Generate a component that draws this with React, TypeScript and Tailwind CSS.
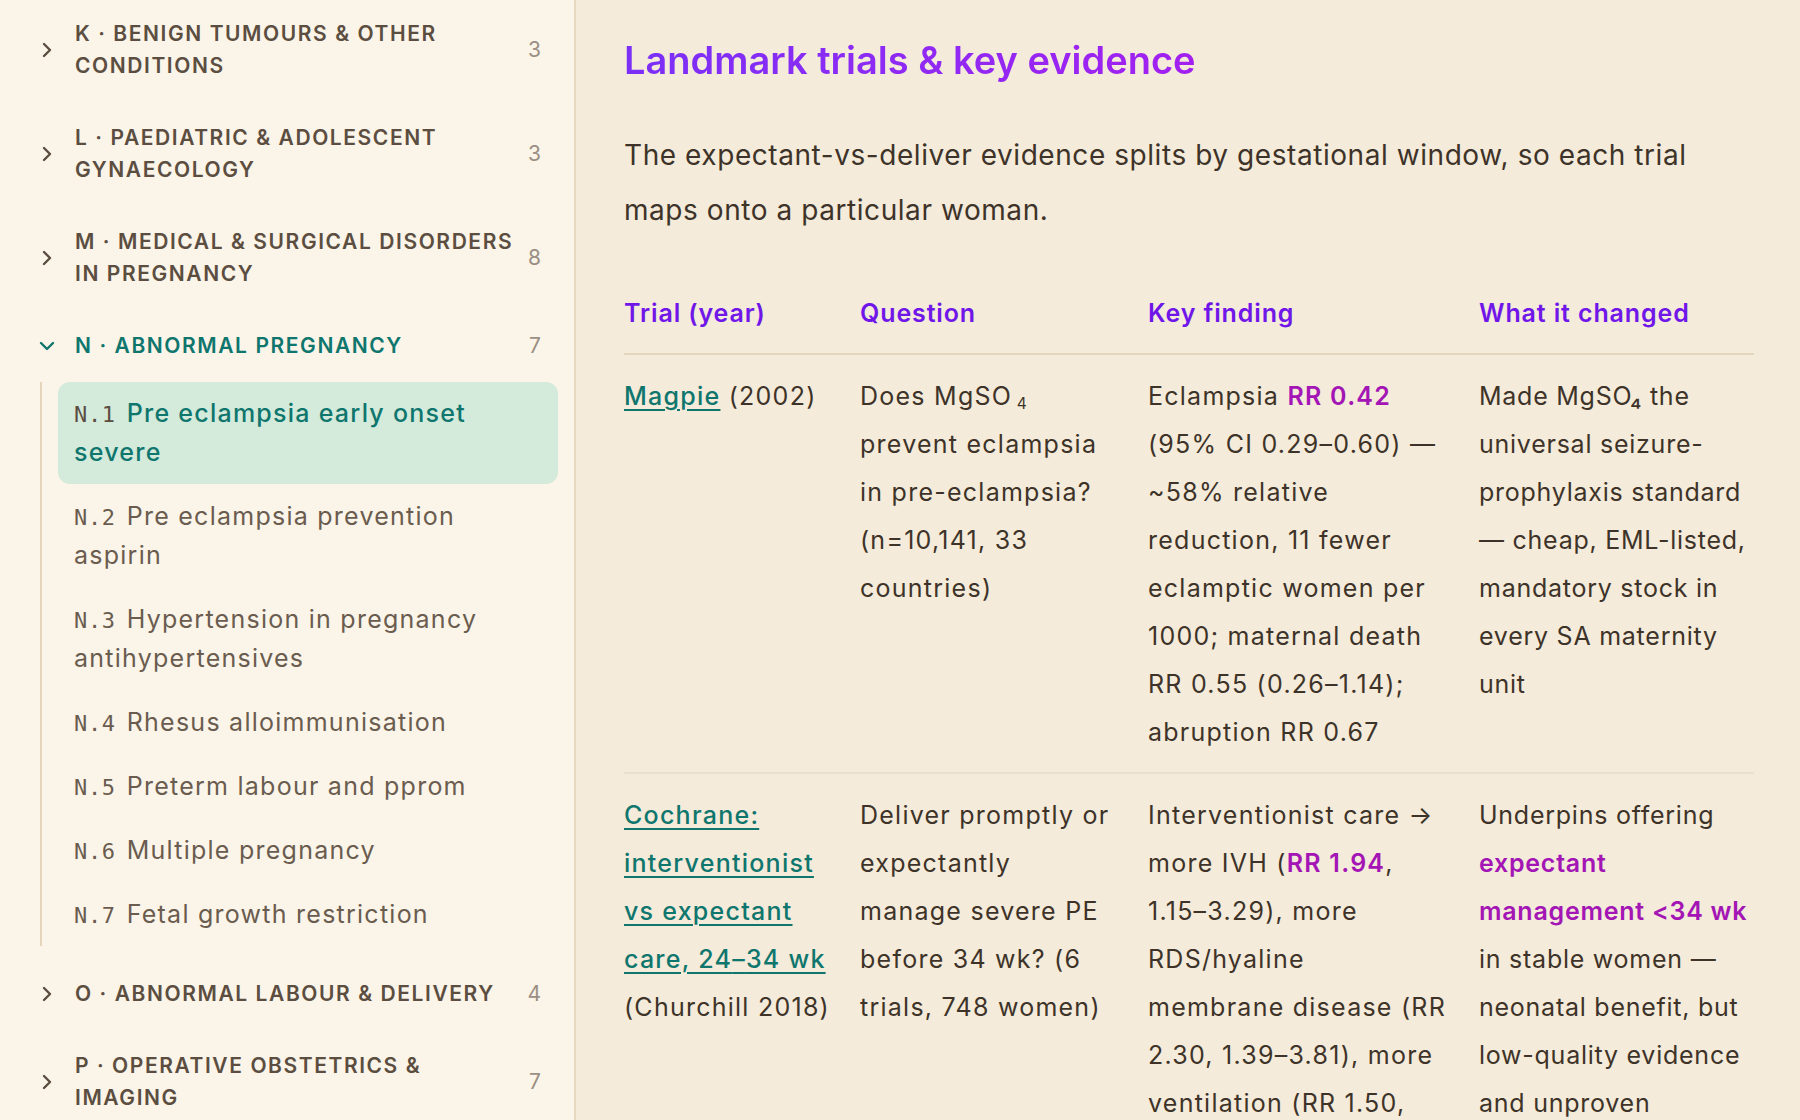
import React from "react";

const SANS = { fontFamily: "Inter, 'Noto Sans', sans-serif" };
const MONO = { fontFamily: "'DejaVu Sans Mono', 'Liberation Mono', monospace" };
const ND = "\u2060\u2013\u2060";

function Chevron({ open }: { open?: boolean }) {
  return (
    <svg width="22" height="22" viewBox="0 0 22 22" fill="none" className="shrink-0">
      {open ? (
        <path d="M5 8 L11 14 L17 8" stroke="currentColor" strokeWidth="2.4" strokeLinecap="round" strokeLinejoin="round" />
      ) : (
        <path d="M8 5 L14 11 L8 17" stroke="currentColor" strokeWidth="2.4" strokeLinecap="round" strokeLinejoin="round" />
      )}
    </svg>
  );
}

function Section({ label, count, open }: { label: string; count: number; open?: boolean }) {
  return (
    <div className={`flex items-center py-5 pl-[20px] pr-[17px] ${open ? "text-[#0f766e]" : "text-[#5b4e41]"}`}>
      <Chevron open={open} />
      <div className="ml-[17px] flex-1 pr-3 text-[21px] font-semibold uppercase leading-[32px] tracking-[0.075em]">{label}</div>
      <div className="text-[21px] leading-[32px] text-[#9a8f84]">{count}</div>
    </div>
  );
}

const subItems = [
  ["N.1", "Pre eclampsia early onset severe"],
  ["N.2", "Pre eclampsia prevention aspirin"],
  ["N.3", "Hypertension in pregnancy antihypertensives"],
  ["N.4", "Rhesus alloimmunisation"],
  ["N.5", "Preterm labour and pprom"],
  ["N.6", "Multiple pregnancy"],
  ["N.7", "Fetal growth restriction"],
];

function Hi({ children }: { children: React.ReactNode }) {
  return <span className="font-semibold text-[#a315b4]">{children}</span>;
}

function Link({ children }: { children: React.ReactNode }) {
  return <span className="font-medium text-[#0f766e] underline decoration-[2px] underline-offset-[4px]">{children}</span>;
}

function Sub({ children }: { children: React.ReactNode }) {
  return <span className="relative top-[0.25em] ml-[0.3em] text-[0.62em] leading-none">{children}</span>;
}

export default function App() {
  return (
    <div className="flex h-[1120px] w-[1800px] overflow-hidden bg-[#f4ebda]" style={SANS}>
      <aside className="h-full w-[576px] shrink-0 overflow-hidden border-r-2 border-[#e7d9c0] bg-[#fbf4e8] px-4">
        <div className="-mt-[2px]">
          <Section label="K · Benign tumours & other conditions" count={3} />
          <Section label="L · Paediatric & adolescent gynaecology" count={3} />
          <Section label="M · Medical & surgical disorders in pregnancy" count={8} />
          <Section label="N · Abnormal pregnancy" count={7} open />
          <div className="mb-3 ml-6 flex flex-col gap-[1px] border-l-2 border-[#e5d6bb] pl-4">
            {subItems.map(([code, name], i) => (
              <div
                key={code}
                className={`rounded-[12px] py-3 pl-4 pr-6 text-[25px] leading-[39px] tracking-[0.05em] ${
                  i === 0 ? "bg-[#d4eadb] font-medium text-[#0f766e]" : "text-[#6a5c4f]"
                }`}
              >
                <span
                  className={`mr-[11px] text-[22px] font-normal leading-none tracking-[0.03em] ${i === 0 ? "text-[#5b4e41]" : "text-[#6a5c4f]"}`}
                  style={MONO}
                >
                  {code}
                </span>
                {name}
              </div>
            ))}
          </div>
          <Section label="O · Abnormal labour & delivery" count={4} />
          <Section label="P · Operative obstetrics & imaging" count={7} />
        </div>
      </aside>

      <main className="h-full flex-1 overflow-hidden pl-12 pr-[46px] pt-[36px]">
        <h2 className="w-fit bg-gradient-to-r from-[#7b2ff7] to-[#a21ff0] bg-clip-text text-[38px] font-semibold leading-[48px] text-transparent">
          Landmark trials &amp; key evidence
        </h2>
        <p className="mt-[44px] pr-1 text-[28px] leading-[55px] tracking-[0.02em] text-[#3e3329]">
          The expectant-vs-deliver evidence splits by gestational window, so each trial maps onto a particular woman.
        </p>

        <table className="mt-[59px] w-full table-fixed border-collapse text-left text-[25px] leading-[48px] tracking-[0.05em] text-[#3e3329]">
          <colgroup>
            <col className="w-[236px]" />
            <col className="w-[288px]" />
            <col className="w-[331px]" />
            <col />
          </colgroup>
          <thead>
            <tr className="border-b-2 border-[#e3d6bd] text-[25px] font-semibold tracking-[0.035em] text-[#7016e8]">
              <th className="pb-6 pr-6 font-semibold leading-[32px]">Trial (year)</th>
              <th className="pb-6 pr-6 font-semibold leading-[32px]">Question</th>
              <th className="pb-6 pr-6 font-semibold leading-[32px]">Key finding</th>
              <th className="pb-6 font-semibold leading-[32px]">What it changed</th>
            </tr>
          </thead>
          <tbody>
            <tr className="border-b-2 border-[#ebe0cc] align-top">
              <td className="pb-4 pr-[25px] pt-[17px]">
                <Link>Magpie</Link> (2002)
              </td>
              <td className="pb-4 pr-[30px] pt-[17px]">
                Does MgSO<Sub>4</Sub> prevent eclampsia in pre-eclampsia? (n=10,141, 33 countries)
              </td>
              <td className="pb-4 pr-[26px] pt-[17px]">
                Eclampsia <Hi>RR 0.42</Hi> (95% CI 0.29{ND}0.60) — ~58% relative reduction, 11 fewer eclamptic women per 1000; maternal death RR 0.55 (0.26{ND}1.14); abruption RR 0.67
              </td>
              <td className="pb-4 pt-[17px] tracking-[0.03em]">
                Made MgSO₄ the universal seizure-prophylaxis standard — cheap, EML-listed, mandatory stock in every SA maternity unit
              </td>
            </tr>
            <tr className="align-top">
              <td className="pb-4 pr-[25px] pt-[17px]">
                <Link>Cochrane: interventionist vs expectant care, 24{ND}34 wk</Link> (Churchill 2018)
              </td>
              <td className="pb-4 pr-[30px] pt-[17px]">Deliver promptly or expectantly manage severe PE before 34 wk? (6 trials, 748 women)</td>
              <td className="pb-4 pr-[26px] pt-[17px]">
                Interventionist care → more IVH (<Hi>RR 1.94</Hi>, 1.15{ND}3.29), more RDS/hyaline
                <br />
                membrane disease (RR 2.30, 1.39{ND}3.81), more ventilation (RR 1.50, 1.11{ND}2.02) and NICU admission
              </td>
              <td className="pb-4 pt-[17px] tracking-[0.03em]">
                Underpins offering <Hi>expectant management &lt;34 wk</Hi> in stable women — neonatal benefit, but low-quality evidence and unproven maternal safety
              </td>
            </tr>
          </tbody>
        </table>
      </main>
    </div>
  );
}
